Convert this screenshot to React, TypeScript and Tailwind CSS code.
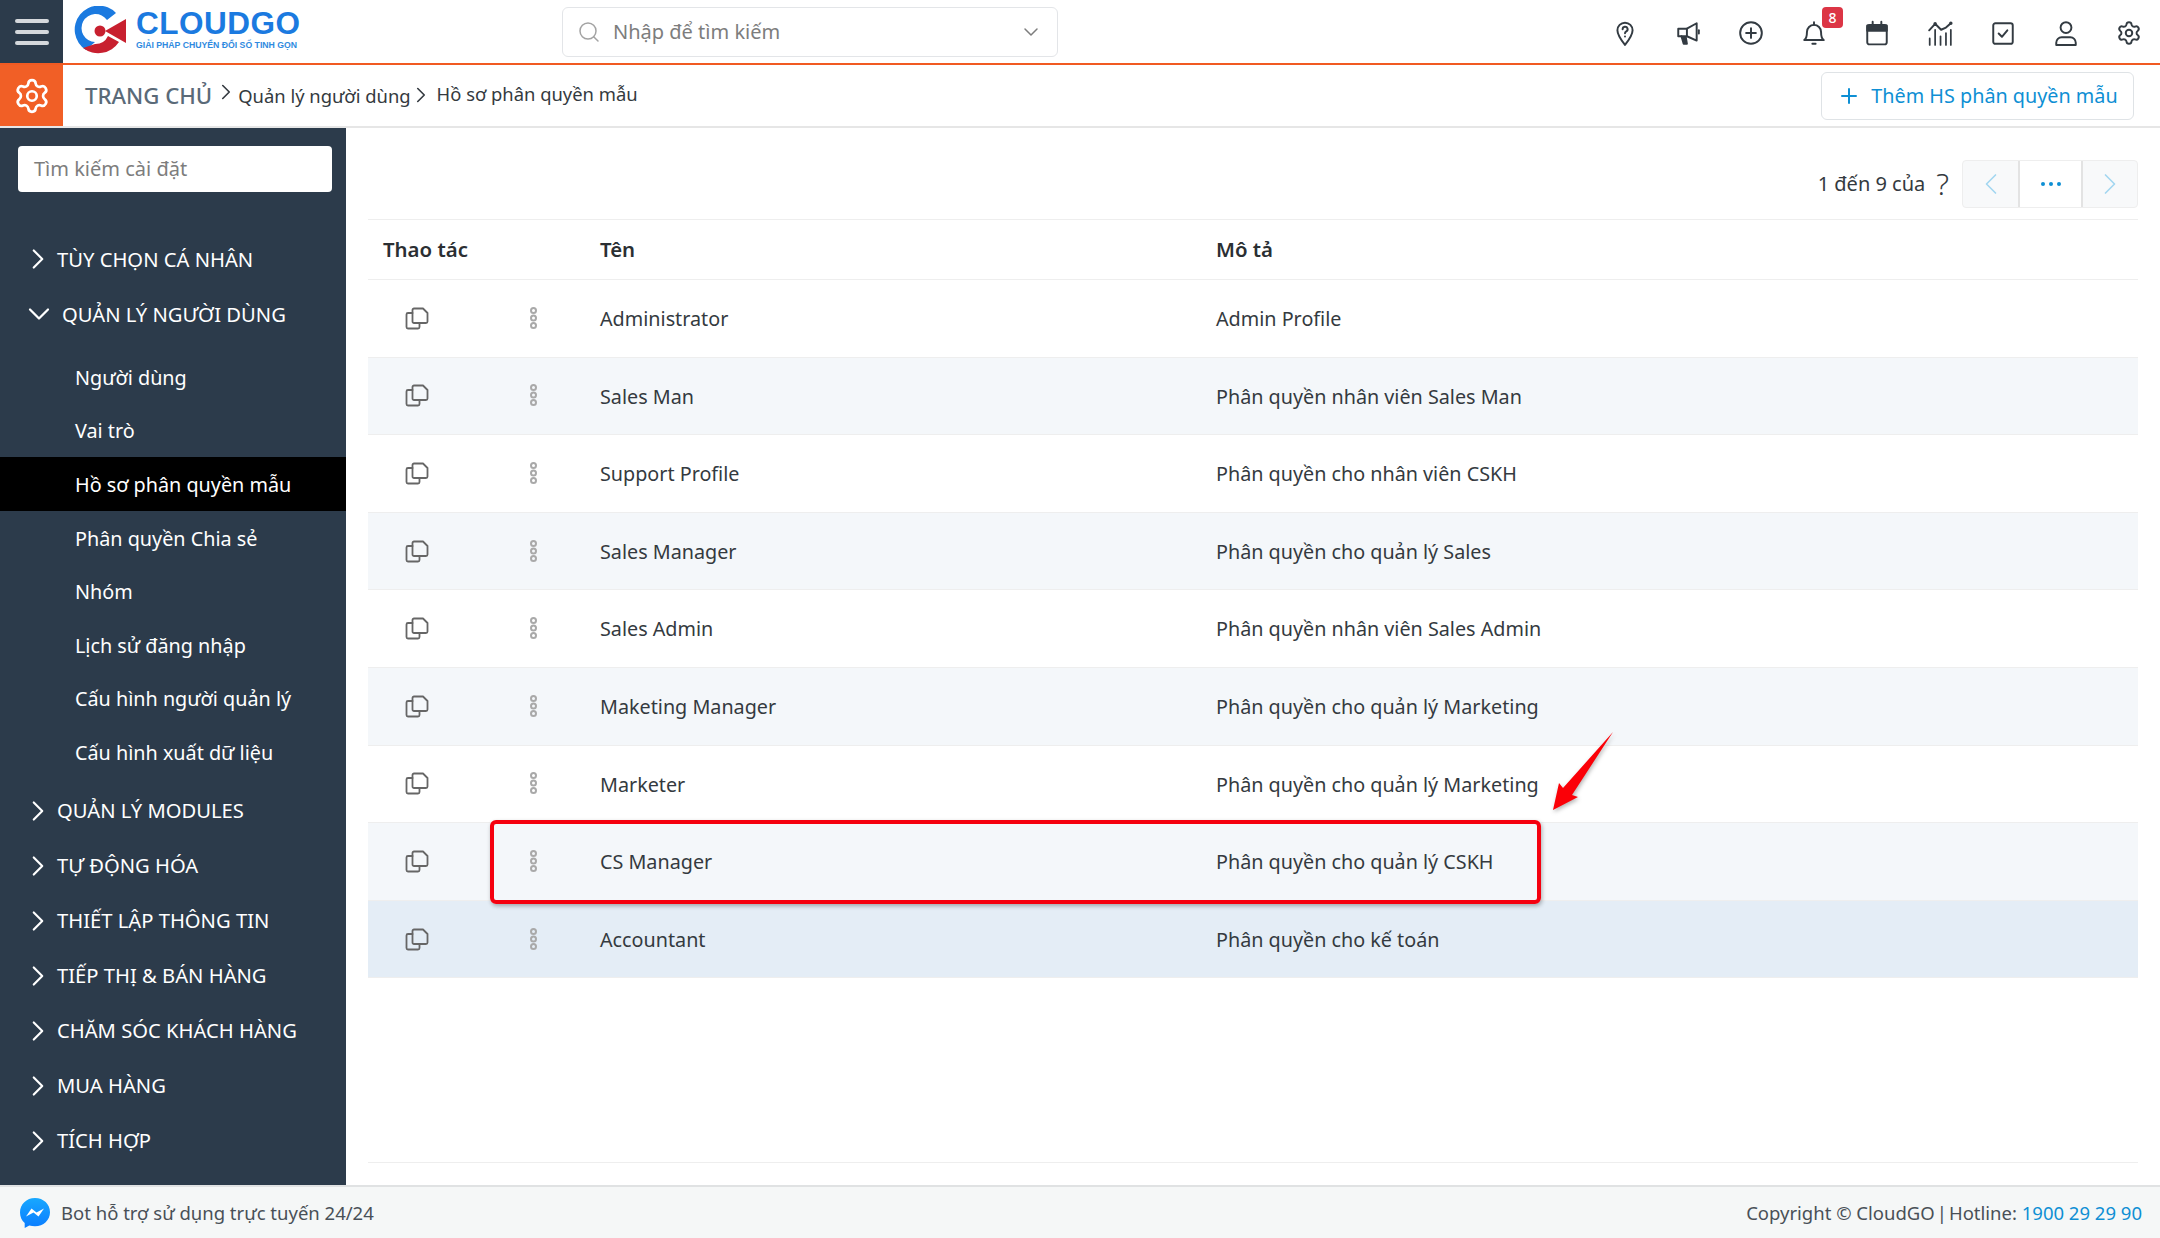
import { ChevronDown, ChevronLeft, ChevronRight, Plus, Search, Settings } from "lucide-react";

const menuTop = ["TÙY CHỌN CÁ NHÂN"];
const subItems = [
  "Người dùng",
  "Vai trò",
  "Hồ sơ phân quyền mẫu",
  "Phân quyền Chia sẻ",
  "Nhóm",
  "Lịch sử đăng nhập",
  "Cấu hình người quản lý",
  "Cấu hình xuất dữ liệu",
];
const menuBottom = [
  "QUẢN LÝ MODULES",
  "TỰ ĐỘNG HÓA",
  "THIẾT LẬP THÔNG TIN",
  "TIẾP THỊ & BÁN HÀNG",
  "CHĂM SÓC KHÁCH HÀNG",
  "MUA HÀNG",
  "TÍCH HỢP",
];
const rows = [
  ["Administrator", "Admin Profile"],
  ["Sales Man", "Phân quyền nhân viên Sales Man"],
  ["Support Profile", "Phân quyền cho nhân viên CSKH"],
  ["Sales Manager", "Phân quyền cho quản lý Sales"],
  ["Sales Admin", "Phân quyền nhân viên Sales Admin"],
  ["Maketing Manager", "Phân quyền cho quản lý Marketing"],
  ["Marketer", "Phân quyền cho quản lý Marketing"],
  ["CS Manager", "Phân quyền cho quản lý CSKH"],
  ["Accountant", "Phân quyền cho kế toán"],
];

function Logo() {
  return (
    <svg width="58" height="52" viewBox="0 0 58 52" className="shrink-0">
      <path d="M43 7 A24 24 0 1 0 13 44 L22 36 A14 14 0 1 1 34 14 Z" fill="#1b7ae0" />
      <path d="M10 42 A25 25 0 0 0 46 36 L35 30 A14 14 0 0 1 22 38 Z" fill="#c8202f" />
      <path d="M53 13 L53 37 L32 25 Z" fill="#c8202f" />
      <circle cx="27" cy="25" r="5.5" fill="#c8202f" />
    </svg>
  );
}

function TopIcons() {
  const base = {
    width: 26,
    height: 26,
    viewBox: "0 0 24 24",
    fill: "none",
    stroke: "#333b42",
    strokeWidth: 1.8,
    strokeLinecap: "round" as const,
    strokeLinejoin: "round" as const,
  };
  return (
    <div className="mr-[18px] ml-auto flex translate-y-[1px] items-center gap-[37px]">
      <svg {...base}>
        <path d="M12 23 C8 18 5 14 5 9.5 a7 7 0 0 1 14 0 C19 14 16 18 12 23 Z" />
        <path d="M9.8 8.5 a2.3 2.3 0 1 1 3.4 2 c-.8.5-1.2 1-1.2 1.8" />
        <path d="M12 15.2 v.1" />
      </svg>
      <svg {...base}>
        <path d="M3 8 H11 L20 3 V19 L11 15 H3 Z" />
        <path d="M11 8 V15" />
        <path d="M22 9.5 V12.5" />
        <path d="M6 15 L8 22 H11 L10 16" fill="#333b42" />
      </svg>
      <svg {...base}>
        <circle cx="12" cy="12" r="10" />
        <path d="M12 7.5 V16.5 M7.5 12 H16.5" />
      </svg>
      <div className="relative">
        <svg {...base}>
          <path d="M3 18.5 C5 17 5.5 14.5 5.5 11 a6.5 6.5 0 0 1 13 0 c0 3.500.5 6 2.500 7.500 Z" />
          <path d="M12 2 V4.500" />
          <path d="M10.500 22 H13.500" />
        </svg>
        <span className="absolute -top-[13px] left-[21px] flex h-[21px] w-[21px] items-center justify-center rounded-[4px] bg-[#dc3545] text-[14px] font-medium text-white">
          8
        </span>
      </div>
      <svg {...base}>
        <rect x="3" y="4.500" width="18" height="18" rx="2" />
        <path d="M3 5 H21 V10 H3 Z" fill="#333b42" />
        <path d="M8 1.500 V5 M16 1.500 V5" />
      </svg>
      <svg {...base} strokeWidth={1.6}>
        <path d="M2 9.500 L7.500 3.500 L13 9 L17.500 7 L22 3" strokeWidth={1.800} />
        <circle cx="7.500" cy="3.500" r=".8" fill="#333b42" />
        <circle cx="22" cy="3" r=".8" fill="#333b42" />
        <path d="M2.500 17 V23 M7.500 9 V23 M12.500 15 V23 M17.500 12 V23 M22 9 V23" />
      </svg>
      <svg {...base}>
        <rect x="3" y="3" width="18" height="19" rx="2" />
        <path d="M8 12.500 L11 15.500 L16 9.500" />
      </svg>
      <svg {...base}>
        <circle cx="12" cy="7" r="5" />
        <path d="M3 23 v-2 a5 5 0 0 1 5-5 h8 a5 5 0 0 1 5 5 v2 Z" />
      </svg>
      <Settings size={26} strokeWidth={1.8} color="#333b42" />
    </div>
  );
}

function CopyIcon() {
  return (
    <svg width="24" height="24" viewBox="0 0 24 24" fill="none" stroke="#666666" strokeWidth="1.800" strokeLinecap="round" strokeLinejoin="round">
      <path d="M9 2.500 H18 L22.500 7 V15.500 a1.500 1.500 0 0 1-1.500 1.500 H9 a1.500 1.500 0 0 1-1.500-1.500 V4 a1.500 1.500 0 0 1 1.500-1.500 Z" />
      <path d="M7.500 7 H3 a1.500 1.500 0 0 0-1.500 1.500 V21 a1.500 1.500 0 0 0 1.500 1.500 H13 a1.500 1.500 0 0 0 1.500-1.500 V17" />
    </svg>
  );
}

function DotsIcon() {
  return (
    <svg width="9" height="22" viewBox="0 0 9 22" fill="none" stroke="#a9a9a9" strokeWidth="2">
      <circle cx="4.500" cy="3.500" r="2.500" />
      <circle cx="4.500" cy="11" r="2.500" />
      <circle cx="4.500" cy="18.500" r="2.500" />
    </svg>
  );
}

function MenuRow({ label }: { label: string }) {
  return (
    <div className="flex h-[55px] items-center pl-[21px] text-[20.200px] text-white">
      <ChevronRight size={34} strokeWidth={1.500} className="mr-[2px] shrink-0" />
      <span>{label}</span>
    </div>
  );
}

export default function App() {
  return (
    <div className="relative flex h-[1238px] w-[2160px] flex-col overflow-hidden bg-white font-['Noto_Sans','Open_Sans',sans-serif] text-[#343a40]">
      {/* header */}
      <header className="flex h-[65px] shrink-0 items-center border-b-2 border-[#f15a22] bg-white">
        <div className="flex h-[63px] w-[63px] shrink-0 flex-col items-center justify-center gap-[7px] bg-[#2c3b4b]">
          <span className="h-[4px] w-[34px] rounded bg-[#d5d8dc]" />
          <span className="h-[4px] w-[34px] rounded bg-[#d5d8dc]" />
          <span className="h-[4px] w-[34px] rounded bg-[#d5d8dc]" />
        </div>
        <div className="ml-[10px] flex w-[235px] shrink-0 items-center gap-[5px]">
          <Logo />
          <div className="flex -translate-y-[3px] flex-col">
            <span className="font-['Liberation_Sans',sans-serif] text-[31.500px] leading-[30px] font-bold tracking-[0.5px] text-[#1b7ae0]">CLOUDGO</span>
            <span className="mt-[3px] font-['Liberation_Sans',sans-serif] text-[8.700px] leading-[9px] font-bold whitespace-nowrap text-[#2f8ae0]">GIẢI PHÁP CHUYỂN ĐỔI SỐ TINH GỌN</span>
          </div>
        </div>
        <div className="ml-[254px] flex h-[50px] w-[496px] shrink-0 items-center rounded-[6px] border border-[#e3e5e8] pr-[14px] pl-[14px]">
          <Search size={24} strokeWidth={1.500} color="#a3a3a3" />
          <span className="ml-[12px] text-[20px] text-[#7d7d7d]">Nhập để tìm kiếm</span>
          <ChevronDown size={24} strokeWidth={1.500} color="#7d7d7d" className="ml-auto" />
        </div>
        <TopIcons />
      </header>

      {/* breadcrumb bar */}
      <div className="flex h-[63px] shrink-0 items-center border-b-2 border-[#e6e6e6] bg-white">
        <div className="flex h-[61px] w-[63px] shrink-0 items-center justify-center bg-[#f15f26]">
          <Settings size={38} strokeWidth={1.700} color="white" />
        </div>
        <span className="ml-[22px] text-[22.200px] font-medium text-[#5a6a78]">TRANG CHỦ</span>
        <ChevronRight size={26} strokeWidth={1.500} className="ml-[1px] -translate-y-[4px] text-[#343a40]" />
        <span className="-ml-[1px] text-[18.400px] text-[#343a40]">Quản lý người dùng</span>
        <ChevronRight size={26} strokeWidth={1.500} className="-ml-[3px] -translate-y-[1px] text-[#343a40]" />
        <span className="ml-[3px] -translate-y-[2px] text-[18.400px] text-[#343a40]">Hồ sơ phân quyền mẫu</span>
        <button className="mr-[26px] ml-auto flex h-[48px] w-[313px] items-center justify-center rounded-[6px] border border-[#dfe3e6] text-[19.800px] text-[#0e8fd4]">
          <Plus size={24} strokeWidth={2} className="mr-[10px]" />
          Thêm HS phân quyền mẫu
        </button>
      </div>

      <div className="flex min-h-0 flex-1">
        {/* sidebar */}
        <aside className="w-[346px] shrink-0 bg-[#2c3b4b] pt-[18px]">
          <div className="ml-[18px] flex h-[46px] w-[314px] items-center rounded-[4px] bg-white pl-[16px] text-[20px] text-[#7d7d7d]">
            Tìm kiếm cài đặt
          </div>
          <div className="mt-[39.500px]">
            {menuTop.map((m) => (
              <MenuRow key={m} label={m} />
            ))}
            <div className="flex h-[55px] items-center pl-[21px] text-[20.200px] text-white">
              <ChevronDown size={36} strokeWidth={1.500} className="mr-[5px] shrink-0" />
              <span>QUẢN LÝ NGƯỜI DÙNG</span>
            </div>
            <div className="mt-[8.500px] mb-[4.500px]">
              {subItems.map((s, i) => (
                <div
                  key={s}
                  className={
                    i === 2
                      ? "flex h-[54px] items-center bg-black pt-[2px] pl-[75px] text-[19.800px] text-white"
                      : "flex h-[53.500px] items-center pt-[2px] pl-[75px] text-[19.800px] text-white"
                  }
                >
                  {s}
                </div>
              ))}
            </div>
            {menuBottom.map((m) => (
              <MenuRow key={m} label={m} />
            ))}
          </div>
        </aside>

        {/* content */}
        <main className="min-w-0 flex-1 pr-[22px] pl-[22px]">
          <div className="flex h-[92px] items-end justify-end border-b border-[#eeeeee] pb-[11px]">
            <div className="flex h-[48px] items-center">
              <span className="text-[20px] text-[#343a40]">1 đến 9 của</span>
              <span className="mr-[13px] ml-[11px] text-[30px] leading-none font-light text-[#343a40]">?</span>
            </div>
            <div className="flex h-[48px] w-[176px] rounded-[4px] border border-[#eeeeee] bg-[#f8f9fa]">
              <div className="flex w-[55px] items-center justify-center text-[#a3d6f0]">
                <ChevronLeft size={36} strokeWidth={1.100} />
              </div>
              <div className="flex w-[65px] items-center justify-center gap-[4px] border-x-2 border-[#e3e3e3] bg-white">
                <span className="h-[4px] w-[4px] rounded-full bg-[#0e8fd4]" />
                <span className="h-[4px] w-[4px] rounded-full bg-[#0e8fd4]" />
                <span className="h-[4px] w-[4px] rounded-full bg-[#0e8fd4]" />
              </div>
              <div className="flex flex-1 items-center justify-center text-[#a3d6f0]">
                <ChevronRight size={36} strokeWidth={1.100} />
              </div>
            </div>
          </div>

          <div className="grid h-[60px] grid-cols-[232px_616px_1fr] items-center border-b border-[#eeeeee] text-[20.400px] font-semibold text-[#2b2f33]">
            <span className="pl-[15px]">Thao tác</span>
            <span>Tên</span>
            <span>Mô tả</span>
          </div>

          {rows.map(([name, desc], i) => (
            <div
              key={name}
              className={
                "grid h-[77.600px] grid-cols-[232px_616px_1fr] items-center border-b border-[#eeeeee] pt-[1px] text-[19.750px] text-[#343a40] " +
                (i === 8 ? "bg-[#e4edf6]" : i % 2 === 1 ? "bg-[#f4f7fa]" : "bg-white")
              }
            >
              <div className="flex items-center">
                <div className="ml-[37px] -translate-y-[1px]"><CopyIcon /></div>
                <div className="ml-[100px] -translate-y-[1px]"><DotsIcon /></div>
              </div>
              <span>{name}</span>
              <span>{desc}</span>
            </div>
          ))}

          <div className="mt-[184px] border-b border-[#eeeeee]" />
        </main>
      </div>

      {/* footer */}
      <footer className="flex h-[53px] shrink-0 items-center border-t-2 border-[#e0e2e3] bg-[#f5f7f7] pr-[18px] pl-[20px] text-[18.500px] text-[#495057]">
        <svg width="30" height="30" viewBox="0 0 30 30">
          <defs>
            <linearGradient id="msg" x1="0" y1="1" x2="0" y2="0">
              <stop offset="0" stopColor="#0a7cff" />
              <stop offset="1" stopColor="#18a8ff" />
            </linearGradient>
          </defs>
          <path d="M15 0 C6.500 0 0 6.200 0 14.500 c0 4.300 1.800 8 4.700 10.600 V30 l4.600-2.600 c1.800.5 3.700.8 5.700.8 8.500 0 15-6.200 15-14 C30 6.200 23.500 0 15 0 Z" fill="url(#msg)" />
          <path d="M6 18.500 L11.500 10.500 L16.500 14.500 L24 10.500 L18.500 18.500 L13.500 14.500 Z" fill="white" />
        </svg>
        <span className="ml-[11px]">Bot hỗ trợ sử dụng trực tuyến 24/24</span>
        <span className="ml-auto">
          Copyright © CloudGO<span className="mx-[2px]">|</span>Hotline: <span className="text-[#0e8fd4]">1900 29 29 90</span>
        </span>
      </footer>

      {/* annotation over the table */}
      <div className="absolute top-[820px] left-[490px] h-[84px] w-[1051px] rounded-[6px] border-4 border-[#f5000f] shadow-[1px_2px_4px_rgba(0,0,0,0.3)]" />
      <svg className="absolute top-[728px] left-[1550px] drop-shadow-[1px_2px_2px_rgba(0,0,0,0.3)]" width="66" height="86" viewBox="0 0 66 86">
        <path d="M63 4 L22 67 L28 69 L3 82 L9 55 L13 60 Z" fill="#fb0007" />
      </svg>
    </div>
  );
}
